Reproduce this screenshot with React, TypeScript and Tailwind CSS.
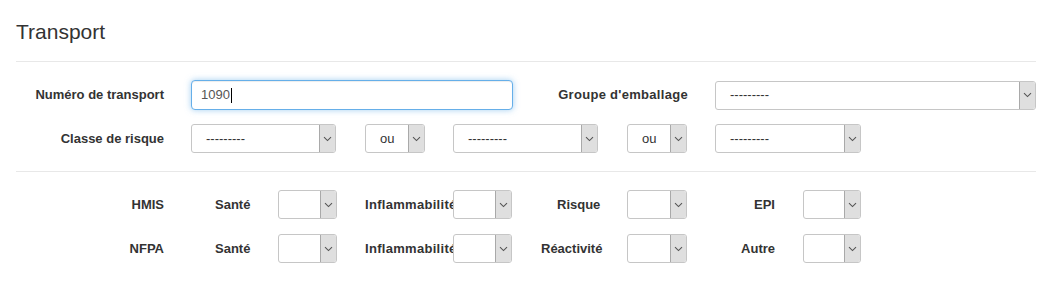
function Chevron() {
  return (
    <svg width="9" height="6" viewBox="0 0 9 6" className="block">
      <path d="M1 1.2 L4.5 4.6 L8 1.2" fill="none" stroke="#555" strokeWidth="1.1" />
    </svg>
  );
}

function Select({ className, text }: { className: string; text?: string }) {
  return (
    <div
      className={`flex h-[29px] shrink-0 items-stretch overflow-hidden rounded-[3px] border border-[#c6c6c6] bg-white ${className}`}
    >
      <span className="flex flex-1 items-center pl-[14px] text-[13px] text-[#333]">{text}</span>
      <div className="flex w-[16px] items-center justify-center border-l border-[#a9a9a9] bg-[#dfdfdf]">
        <Chevron />
      </div>
    </div>
  );
}

function Label({ className, children }: { className: string; children: React.ReactNode }) {
  return (
    <div className={`shrink-0 whitespace-nowrap text-[13px] font-bold text-[#333] ${className}`}>{children}</div>
  );
}

export default function App() {
  const dash = "---------";
  return (
    <div className="min-h-screen bg-white font-['Liberation_Sans',Arial,sans-serif] text-[#333]">
      <div className="ml-4 w-[1020px]">
        <h3 className="pt-[20px] text-[21px] leading-[23px]">Transport</h3>
        <div className="mt-[18px] border-t border-[#e8e8e8]" />

        <div className="mt-[18px] flex items-center">
          <Label className="w-[148px] text-right">Numéro de transport</Label>
          <div className="ml-[27px] flex h-[30px] w-[322px] items-center rounded-[4px] border border-[#66afe9] bg-white pl-[9px] text-[13px] text-[#555] shadow-[inset_0_1px_1px_rgba(0,0,0,0.075),0_0_6px_rgba(102,175,233,0.6)]">
            1090
            <span className="ml-px h-[15px] w-px bg-black" />
          </div>
          <Label className="w-[175px] text-right tracking-[0.3px]">Groupe d'emballage</Label>
          <Select className="ml-[27px] w-[321px]" text={dash} />
        </div>

        <div className="mt-[14px] flex items-center">
          <Label className="w-[148px] text-right">Classe de risque</Label>
          <Select className="ml-[27px] w-[145px]" text={dash} />
          <Select className="ml-[29px] w-[60px]" text="ou" />
          <Select className="ml-[28px] w-[145px]" text={dash} />
          <Select className="ml-[29px] w-[60px]" text="ou" />
          <Select className="ml-[28px] w-[146px]" text={dash} />
        </div>

        <div className="mt-[18px] border-t border-[#e8e8e8]" />

        <div className="mt-[18px] flex items-center">
          <Label className="w-[148px] text-right">HMIS</Label>
          <Label className="ml-[51px] w-[63px]">Santé</Label>
          <Select className="w-[59px]" />
          <Label className="ml-[28px] w-[88px] tracking-[0.3px]">Inflammabilité</Label>
          <Select className="w-[59px]" />
          <Label className="w-[115px] pl-[45px]">Risque</Label>
          <Select className="w-[60px]" />
          <Label className="w-[116px] pr-[28px] text-right">EPI</Label>
          <Select className="w-[58px]" />
        </div>

        <div className="mt-[15px] flex items-center">
          <Label className="w-[148px] text-right">NFPA</Label>
          <Label className="ml-[51px] w-[63px]">Santé</Label>
          <Select className="w-[59px]" />
          <Label className="ml-[28px] w-[88px] tracking-[0.3px]">Inflammabilité</Label>
          <Select className="w-[59px]" />
          <Label className="w-[115px] pl-[29px]">Réactivité</Label>
          <Select className="w-[60px]" />
          <Label className="w-[116px] pr-[28px] text-right">Autre</Label>
          <Select className="w-[58px]" />
        </div>
      </div>
    </div>
  );
}
